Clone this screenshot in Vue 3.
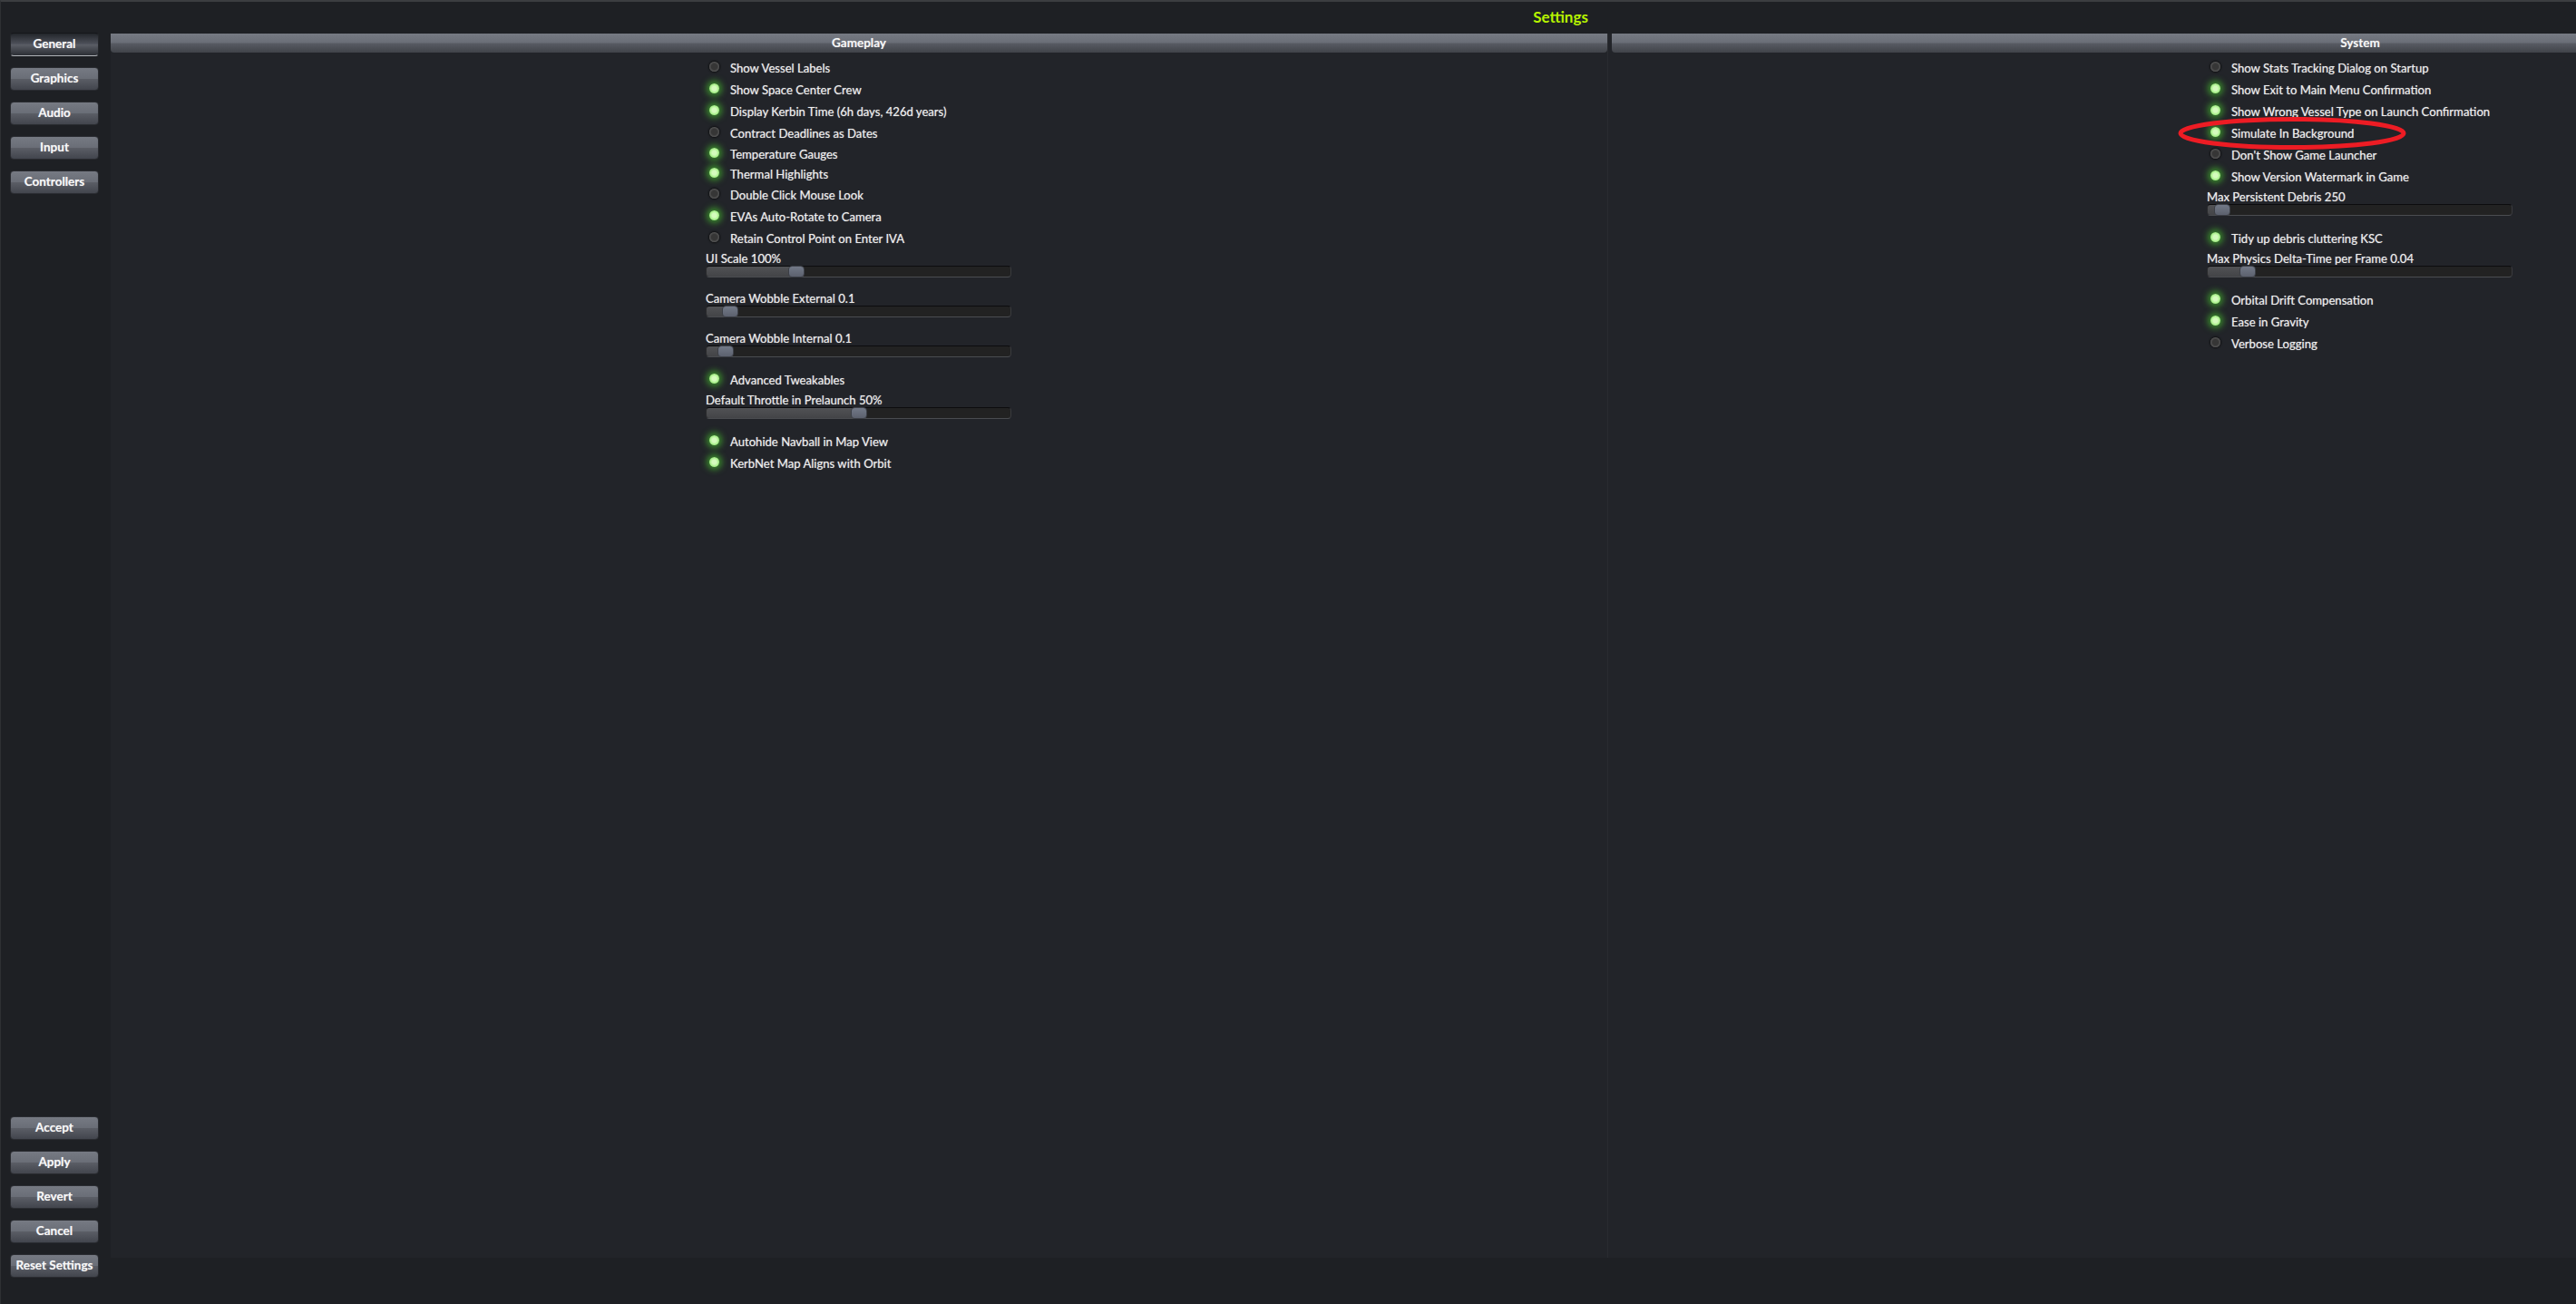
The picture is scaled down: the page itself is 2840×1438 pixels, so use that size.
<script setup>
const topNav = [
  { label: 'General', active: true },
  { label: 'Graphics' },
  { label: 'Audio' },
  { label: 'Input' },
  { label: 'Controllers' },
]
const bottomNav = [
  { label: 'Accept' },
  { label: 'Apply' },
  { label: 'Revert' },
  { label: 'Cancel' },
  { label: 'Reset Settings' },
]
const gameplay = [
  { t: 'Show Vessel Labels', on: false },
  { t: 'Show Space Center Crew', on: true },
  { t: 'Display Kerbin Time (6h days, 426d years)', on: true },
  { t: 'Contract Deadlines as Dates', on: false },
  { t: 'Temperature Gauges', on: true, cls: 'up1' },
  { t: 'Thermal Highlights', on: true, cls: 'up2' },
  { t: 'Double Click Mouse Look', on: false, cls: 'up1' },
  { t: 'EVAs Auto-Rotate to Camera', on: true },
  { t: 'Retain Control Point on Enter IVA', on: false },
  { s: 'UI Scale 100%', x: 90 },
  { s: 'Camera Wobble External 0.1', x: 17 },
  { s: 'Camera Wobble Internal 0.1', x: 12 },
  { t: 'Advanced Tweakables', on: true },
  { s: 'Default Throttle in Prelaunch 50%', x: 159 },
  { t: 'Autohide Navball in Map View', on: true },
  { t: 'KerbNet Map Aligns with Orbit', on: true },
]
const system = [
  { t: 'Show Stats Tracking Dialog on Startup', on: false },
  { t: 'Show Exit to Main Menu Confirmation', on: true },
  { t: 'Show Wrong Vessel Type on Launch Confirmation', on: true },
  { t: 'Simulate In Background', on: true },
  { t: "Don't Show Game Launcher", on: false },
  { t: 'Show Version Watermark in Game', on: true },
  { s: 'Max Persistent Debris 250', x: 7 },
  { t: 'Tidy up debris cluttering KSC', on: true },
  { s: 'Max Physics Delta-Time per Frame 0.04', x: 35 },
  { t: 'Orbital Drift Compensation', on: true },
  { t: 'Ease in Gravity', on: true },
  { t: 'Verbose Logging', on: false },
]
const columns = [
  { title: 'Gameplay', items: gameplay },
  { title: 'System', items: system },
]
</script>

<template>
  <div class="viewport">
    <div class="window">
      <h1 class="title">Settings</h1>
      <div class="body">
        <nav class="side">
          <div class="group">
            <button v-for="b in topNav" :key="b.label" class="btn" :class="{ active: b.active }">{{ b.label }}</button>
          </div>
          <div class="group">
            <button v-for="b in bottomNav" :key="b.label" class="btn">{{ b.label }}</button>
          </div>
        </nav>
        <main class="panel">
          <section v-for="c in columns" :key="c.title" class="col">
            <header class="head">{{ c.title }}</header>
            <div class="list">
              <template v-for="it in c.items" :key="it.t || it.s">
                <div v-if="it.t" class="row" :class="it.cls">
                  <span class="led" :class="{ on: it.on }"></span>
                  <span class="txt">{{ it.t }}</span>
                </div>
                <div v-else class="slider">
                  <div class="slabel">{{ it.s }}</div>
                  <div class="track">
                    <div class="fill" :style="{ width: it.x + 9 + 'px' }"><span class="thumb"></span></div>
                  </div>
                </div>
              </template>
            </div>
          </section>
        </main>
      </div>
    </div>
    <svg class="mark" width="260" height="44" viewBox="0 0 260 44">
      <ellipse cx="130" cy="22" rx="123" ry="15.5" fill="none" stroke="#ed1c24" stroke-width="5" />
    </svg>
  </div>
</template>

<style>
html, body { margin: 0; background: #1e2024; }
</style>

<style scoped>
.viewport {
  position: relative;
  width: 2840px;
  height: 1438px;
  overflow: hidden;
  background: #1e2024;
  font-family: Lato, "Liberation Sans", sans-serif;
  color: #eeeeee;
}
.window {
  width: 3440px;
  height: 1438px;
  box-sizing: border-box;
  border-top: 2px solid #3b3d40;
  border-left: 1px solid #2e3033;
  display: flex;
  flex-direction: column;
}
.title {
  margin: 0;
  height: 35px;
  line-height: 34px;
  text-align: center;
  font-size: 17px;
  font-weight: 700;
  color: #b7f400;
}
.body {
  display: flex;
  flex: 1;
  padding: 0 12px 29px 0;
}
.side {
  width: 121px;
  flex: none;
  box-sizing: border-box;
  padding-left: 10px;
  margin-top: -1px;
  display: flex;
  flex-direction: column;
  justify-content: space-between;
}
.group {
  display: flex;
  flex-direction: column;
  gap: 12px;
}
.btn {
  width: 98px;
  height: 26px;
  padding: 0 0 2px;
  border: 1px solid #2a2c31;
  border-radius: 4px;
  background: linear-gradient(#767a83 0, #6a6e77 48%, #5a5d65 52%, #42454d 100%);
  color: #f8f8f8;
  font: 700 13.5px Lato, sans-serif;
  text-align: center;
  text-shadow: 0 0 1px rgba(255, 255, 255, 0.45);
}
.btn.active {
  background: linear-gradient(#23262b 0, #4c4f58 46%, #5a5d65 52%, #2c2f35 100%);
  border-color: #15161a #25272b #b0b3b8;
}
.panel {
  flex: 1;
  display: flex;
  height: 1350px;
  background: #222429;
  gap: 4px;
}
.col {
  flex: 1;
  display: flex;
  flex-direction: column;
  box-sizing: border-box;
  border-right: 1px solid #2a2c30;
}
.head {
  height: 21px;
  line-height: 20px;
  text-align: center;
  font-size: 13.5px;
  font-weight: 700;
  color: #f6f6f6;
  border-radius: 0 0 4px 4px;
  background: linear-gradient(#767a83 0, #6a6e77 48%, #585b63 52%, #404349 100%);
  text-shadow: 0 0 1px rgba(255, 255, 255, 0.45);
}
.list {
  width: 337px;
  margin: 5px 0 0 656px;
  display: flex;
  flex-direction: column;
}
.row {
  position: relative;
  height: 24px;
  display: flex;
  align-items: center;
  font-size: 13.1px;
  text-shadow: 0 0 1px rgba(255, 255, 255, 0.55);
}
.row.up1 { margin-top: -1px; }
.row.up2 { margin-top: -2px; }
.led {
  width: 11px;
  height: 11px;
  margin: 0 12px 4px 4px;
  border-radius: 50%;
  flex: none;
  background: radial-gradient(circle, #363636 0 40%, #555555 68%, #969696 100%);
  box-shadow: 0 0 2px 1px rgba(0, 0, 0, 0.6);
}
.led.on {
  background: radial-gradient(circle, #d4fbbd 0 30%, #a6f088 62%, #74d854 100%);
  box-shadow: 0 0 7px 3px rgba(70, 190, 45, 0.7);
}
.slider {
  margin: 2px 0 13px;
}
.slabel {
  height: 16px;
  line-height: 17px;
  font-size: 13.1px;
  text-shadow: 0 0 1px rgba(255, 255, 255, 0.55);
}
.track {
  position: relative;
  height: 13px;
  box-sizing: border-box;
  border-top: 1px solid #0c0c0e;
  border-bottom: 1px solid #4a4c50;
  border-left: 1px solid #2a2b2d;
  border-right: 1px solid #3a3b3e;
  border-radius: 4px;
  background: #222222;
}
.fill {
  position: relative;
  height: 100%;
  border-radius: 3px 0 0 3px;
  background: linear-gradient(#515255, #434447);
}
.thumb {
  position: absolute;
  right: -9px;
  top: -1px;
  width: 18px;
  height: 13px;
  box-sizing: border-box;
  border: 1px solid #3c3f46;
  border-radius: 4px;
  background: linear-gradient(#727987, #5c616e);
}
.mark {
  position: absolute;
  left: 2397px;
  top: 125px;
}
</style>
